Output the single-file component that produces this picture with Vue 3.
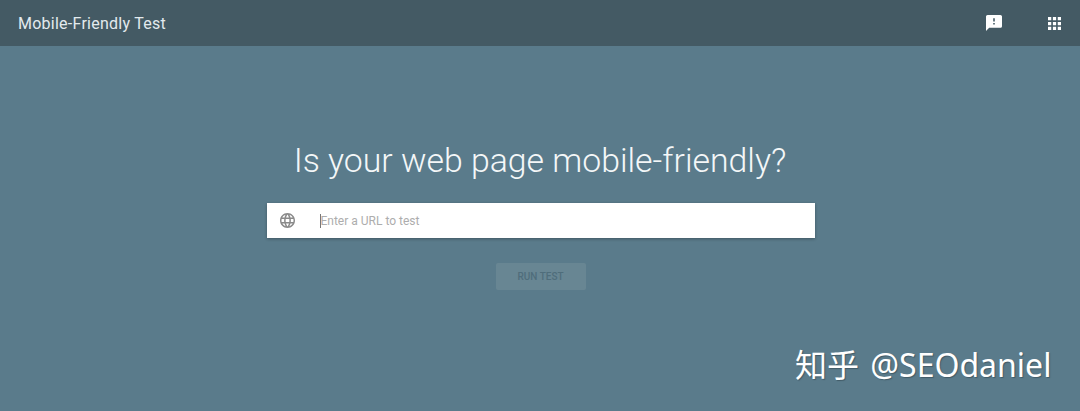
<template>
  <div class="page">
    <header class="topbar">
      <span class="topbar-title">Mobile-Friendly Test</span>
      <div class="topbar-icons">
        <svg class="icon" viewBox="2 2 20 20">
          <path fill="#fff" d="M20 2H4c-1.1 0-2 .9-2 2v18l4-4h14c1.1 0 2-.9 2-2V4c0-1.100-.9-2-2-2zm-7 12h-2v-2h2v2zm0-4h-2V6h2v4z" />
        </svg>
        <svg class="icon grid" viewBox="4 4 16 16">
          <path fill="#fff" d="M4 8h4V4H4v4zm6 12h4v-4h-4v4zm-6 0h4v-4H4v4zm0-6h4v-4H4v4zm6 0h4v-4h-4v4zm6-10v4h4V4h-4zm-6 4h4V4h-4v4zm6 6h4v-4h-4v4zm0 6h4v-4h-4v4z" />
        </svg>
      </div>
    </header>
    <main class="content">
      <h1 class="headline">Is your web page mobile-friendly?</h1>
      <div class="url-box">
        <svg class="globe" viewBox="2 2 20 20">
          <path fill="#8a8a8a" d="M11.99 2C6.47 2 2 6.480 2 12s4.470 10 9.990 10C17.520 22 22 17.520 22 12S17.520 2 11.990 2zm6.930 6h-2.950c-.32-1.250-.78-2.450-1.380-3.560 1.840.63 3.370 1.910 4.330 3.560zM12 4.040c.83 1.200 1.480 2.530 1.910 3.960h-3.820c.43-1.430 1.080-2.760 1.910-3.960zM4.260 14C4.100 13.360 4 12.690 4 12s.1-1.360.26-2h3.380c-.08.66-.14 1.320-.14 2 0 .68.06 1.340.14 2H4.260zm.82 2h2.950c.32 1.250.78 2.450 1.380 3.560-1.840-.63-3.370-1.900-4.330-3.560zm2.950-8H5.080c.96-1.660 2.490-2.930 4.330-3.560C8.810 5.550 8.350 6.750 8.030 8zM12 19.960c-.83-1.200-1.480-2.530-1.910-3.960h3.820c-.43 1.430-1.080 2.760-1.910 3.960zM14.340 14H9.660c-.09-.66-.16-1.320-.16-2 0-.68.07-1.350.16-2h4.680c.09.65.16 1.320.16 2 0 .68-.07 1.340-.16 2zm.25 5.560c.6-1.110 1.060-2.310 1.380-3.560h2.950c-.96 1.650-2.490 2.930-4.330 3.560zM16.360 14c.08-.66.14-1.320.14-2 0-.68-.06-1.340-.14-2h3.380c.16.64.26 1.310.26 2s-.1 1.360-.26 2h-3.380z" />
        </svg>
        <span class="caret"></span>
        <span class="placeholder">Enter a URL to test</span>
      </div>
      <button class="run-btn" disabled>RUN TEST</button>
    </main>
    <div class="watermark">知乎 @SEOdaniel</div>
  </div>
</template>

<script setup>
</script>

<style>
body {
  margin: 0;
  background: #5a7b8b;
}
</style>

<style scoped>
.page {
  position: relative;
  width: 1080px;
  height: 411px;
  overflow: hidden;
  background: #5a7b8b;
  font-family: Roboto, "Liberation Sans", sans-serif;
}

.topbar {
  height: 46px;
  box-sizing: border-box;
  background: #445a64;
  display: flex;
  align-items: center;
  justify-content: space-between;
  padding: 0 19px 0 18px;
}

.topbar-title {
  font-size: 16px;
  letter-spacing: 0.25px;
  color: #e3eaee;
}

.topbar-icons {
  display: flex;
  align-items: center;
  gap: 46px;
}

.icon {
  display: block;
  width: 16px;
  height: 16px;
}

.icon.grid {
  width: 13px;
  height: 13px;
}

.content {
  display: flex;
  flex-direction: column;
  align-items: center;
}

.headline {
  margin: 95px 0 0;
  font-size: 33.8px;
  line-height: 40px;
  font-weight: 300;
  color: #f4f7f8;
}

.url-box {
  margin: 22px 0 0 1px;
  width: 548px;
  height: 35px;
  background: #fff;
  display: flex;
  align-items: center;
  padding-left: 13px;
  box-sizing: border-box;
  box-shadow: 0 1px 3px rgba(0, 0, 0, 0.3);
}

.globe {
  display: block;
  flex-shrink: 0;
  width: 15px;
  height: 15px;
}

.caret {
  width: 1px;
  height: 14px;
  margin-left: 25px;
  background: #777;
}

.placeholder {
  font-size: 12px;
  color: #adadad;
}

.run-btn {
  margin: 25px 0 0 1px;
  width: 90px;
  height: 27px;
  padding: 0;
  border: none;
  border-radius: 2px;
  background: #688693;
  color: #4f6d7b;
  font-family: inherit;
  font-size: 10px;
  font-weight: 500;
}

.watermark {
  position: absolute;
  left: 795px;
  top: 345px;
  font-family: "Noto Sans", "Noto Sans CJK SC", sans-serif;
  font-size: 32px;
  line-height: 40px;
  color: #fff;
  white-space: nowrap;
  word-spacing: 3px;
  text-shadow: 1px 1px 1px rgba(50, 70, 80, 0.6);
}
</style>
